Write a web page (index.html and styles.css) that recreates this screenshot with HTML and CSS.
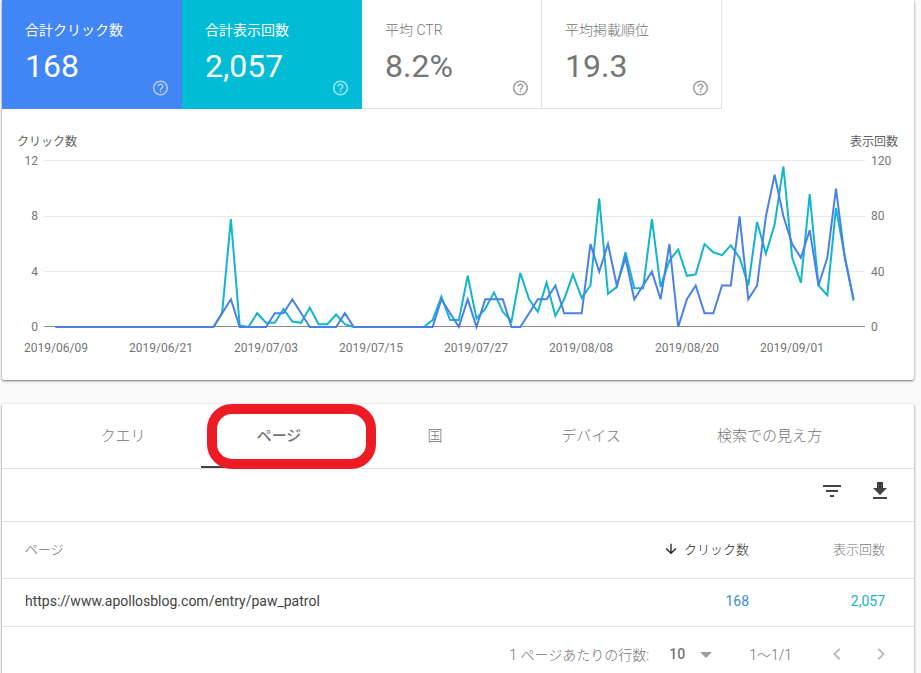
FILE: index.html
```html
<!DOCTYPE html>
<html lang="ja">
<head>
    <meta charset="utf-8">
    <title>検索パフォーマンス</title>
    <link rel="stylesheet" href="styles.css">
</head>
<body>
    <svg class="defs" width="0" height="0">
        <symbol id="help" viewBox="0 0 24 24">
            <path d="M11 18h2v-2h-2v2zm1-16C6.48 2 2 6.48 2 12s4.480 10 10 10 10-4.480 10-10S17.520 2 12 2zm0 18c-4.410 0-8-3.590-8-8s3.590-8 8-8 8 3.590 8 8-3.590 8-8 8zm0-14c-2.210 0-4 1.790-4 4h2c0-1.100.9-2 2-2s2 .9 2 2c0 2-3 1.750-3 5h2c0-2.250 3-2.500 3-5 0-2.210-1.790-4-4-4z"/>
        </symbol>
    </svg>

    <div class="card performance">
        <div class="tiles">
            <div class="tile clicks">
                <div class="tile-label">合計クリック数</div>
                <div class="tile-value">168</div>
                <svg class="help"><use href="#help"/></svg>
            </div>
            <div class="tile impressions">
                <div class="tile-label">合計表示回数</div>
                <div class="tile-value">2,057</div>
                <svg class="help"><use href="#help"/></svg>
            </div>
            <div class="tile">
                <div class="tile-label">平均 CTR</div>
                <div class="tile-value">8.2%</div>
                <svg class="help"><use href="#help"/></svg>
            </div>
            <div class="tile">
                <div class="tile-label">平均掲載順位</div>
                <div class="tile-value">19.3</div>
                <svg class="help"><use href="#help"/></svg>
            </div>
        </div>

        <div class="axis-titles">
            <span>クリック数</span>
            <span>表示回数</span>
        </div>
        <svg class="chart" width="912" height="230" viewBox="0 0 912 230">
            <g class="grid">
                <path d="M42 9.500H863M42 65.500H863M42 120.500H863"/>
                <path class="baseline" d="M42 175.500H863"/>
            </g>
            <g class="left-axis">
                <text x="36" y="14">12</text>
                <text x="36" y="69">8</text>
                <text x="36" y="125">4</text>
                <text x="36" y="180">0</text>
            </g>
            <g class="right-axis">
                <text x="869" y="14">120</text>
                <text x="869" y="69">80</text>
                <text x="869" y="125">40</text>
                <text x="869" y="180">0</text>
            </g>
            <g class="dates">
                <text x="54" y="201">2019/06/09</text>
                <text x="159" y="201">2019/06/21</text>
                <text x="264" y="201">2019/07/03</text>
                <text x="369" y="201">2019/07/15</text>
                <text x="474" y="201">2019/07/27</text>
                <text x="579" y="201">2019/08/08</text>
                <text x="685" y="201">2019/08/20</text>
                <text x="790" y="201">2019/09/01</text>
            </g>
            <polyline id="impressionsLine" class="line-impressions"/>
            <polyline id="clicksLine" class="line-clicks"/>
        </svg>
    </div>

    <div class="card details">
        <div class="tabs">
            <div class="tab">クエリ</div>
            <div class="tab active">ページ<span class="marker"></span></div>
            <div class="tab">国</div>
            <div class="tab">デバイス</div>
            <div class="tab wide">検索での見え方</div>
        </div>
        <div class="toolbar">
            <svg width="24" height="24" viewBox="0 0 24 24"><path d="M10 18h4v-2h-4v2zM3 6v2h18V6H3zm3 7h12v-2H6v2z"/></svg>
            <svg width="24" height="24" viewBox="0 0 24 24"><path d="M19 9h-4V3H9v6H5l7 7 7-7zM5 18v2h14v-2H5z"/></svg>
        </div>
        <table>
            <thead>
                <tr>
                    <th>ページ</th>
                    <th class="num sorted"><svg width="16" height="16" viewBox="0 0 24 24"><path d="M20 12l-1.410-1.410L13 16.170V4h-2v12.170l-5.580-5.590L4 12l8 8 8-8z"/></svg>クリック数</th>
                    <th class="num">表示回数</th>
                </tr>
            </thead>
            <tbody>
                <tr>
                    <td>https://www.apollosblog.com/entry/paw_patrol</td>
                    <td class="num blue">168</td>
                    <td class="num teal">2,057</td>
                </tr>
            </tbody>
        </table>
        <div class="pager">
            <span class="per-page">1 ページあたりの行数:</span>
            <span class="page-size">10</span>
            <svg class="caret" width="12" height="6" viewBox="0 0 12 6"><path d="M0 0h12L6 6z"/></svg>
            <span class="range">1～1/1</span>
            <svg class="prev" width="24" height="24" viewBox="0 0 24 24"><path d="M15.410 7.410L14 6l-6 6 6 6 1.410-1.410L10.830 12z"/></svg>
            <svg class="next" width="24" height="24" viewBox="0 0 24 24"><path d="M10 6L8.590 7.410 13.170 12l-4.580 4.590L10 18l6-6z"/></svg>
        </div>
    </div>

    <script>
        // one value per day, from 2019/06/09
        const clicks = [
            0,0,0,0,0,0,0,0,0,0,0,0,0,0,0,0,0,0,0,1,
            2,0,0,0,0,1,1,2,1,0,0,0,0,1,0,0,0,0,0,0,
            0,0,0,0,2,1,0,2,0,2,2,2,0,0,1,2,2,3,1,1,
            1,6,4,6,3,5,2,3,4,2,6,0,2,3,1,1,3,3,8,2,
            3,8,11,8,6,5,7,3,5,10,5,2
        ];
        const impressions = [
            0,0,0,0,0,0,0,0,0,0,0,0,0,0,0,0,0,0,0,10,
            78,1,0,10,3,3,13,4,3,14,2,2,9,2,0,0,0,0,0,0,
            0,0,0,5,22,5,5,37,6,13,25,11,4,39,20,11,32,8,20,38,
            21,30,93,24,29,54,28,28,78,29,48,56,37,38,60,54,52,59,50,30,
            76,53,74,116,50,32,96,30,23,86,51,19
        ];

        function drawLine(id, data, max) {
            const points = data.map((v, i) => (53.5 + i * 8.77).toFixed(1) + ',' + (176 - v / max * 166).toFixed(1));
            document.getElementById(id).setAttribute('points', points.join(' '));
        }

        drawLine('impressionsLine', impressions, 120);
        drawLine('clicksLine', clicks, 12);
    </script>
</body>
</html>
```
FILE: styles.css
```css
* {
    box-sizing: border-box;
}

body {
    margin: 0;
    height: 673px;
    overflow: hidden;
    background: #fafafa;
    font-family: Roboto, "Noto Sans CJK JP", sans-serif;
    font-size: 14px;
    color: #757575;
}

.defs {
    display: none;
}

.card {
    width: 912px;
    margin-left: 2px;
    background: #fff;
    border-radius: 0 0 2px 2px;
    box-shadow: 0 1px 3px rgba(0,0,0,0.3), 0 1px 2px rgba(0,0,0,0.3);
}

.performance {
    height: 380px;
}

/* Summary tiles */
.tiles {
    display: flex;
    height: 109px;
}

.tile {
    position: relative;
    width: 180px;
    padding: 20px 23px 0;
    border-right: 1px solid #e0e0e0;
    border-bottom: 1px solid #e0e0e0;
}

.tile.clicks {
    background: #4285f4;
    border: 0;
    color: #fff;
}

.tile.impressions {
    background: #00bcd4;
    border: 0;
    color: #fff;
}

.tile-label {
    height: 20px;
    line-height: 20px;
    font-weight: 300;
    white-space: nowrap;
}

.clicks .tile-label,
.impressions .tile-label {
    font-weight: 400;
}

.tile-value {
    margin-top: 6px;
    font-size: 32px;
    line-height: 40px;
}

.tile .help {
    position: absolute;
    left: 149px;
    top: 79px;
    width: 19px;
    height: 18px;
    fill: #9e9e9e;
}

.clicks .help,
.impressions .help {
    fill: rgba(255,255,255,0.6);
}

/* Chart */
.axis-titles {
    display: flex;
    justify-content: space-between;
    height: 42px;
    padding: 23px 16px 0 15px;
    font-size: 12px;
    line-height: 20px;
    color: #616161;
}

.chart {
    display: block;
    font-size: 12px;
    fill: #757575;
}

.grid path {
    stroke: #e8e8e8;
}

.grid .baseline {
    stroke: #8c8c8c;
}

.left-axis {
    text-anchor: end;
}

.dates {
    text-anchor: middle;
}

.chart polyline {
    fill: none;
    stroke-width: 2;
}

.line-impressions {
    stroke: #12b5cb;
}

.line-clicks {
    stroke: #4a80e8;
}

/* Details */
.details {
    height: 300px;
    margin-top: 24px;
}

.tabs {
    display: flex;
    height: 65px;
    padding-left: 43px;
    border-bottom: 1px solid #e0e0e0;
    font-size: 15px;
    font-weight: 300;
    line-height: 65px;
    text-align: center;
}

.tab {
    position: relative;
    width: 156px;
    height: 64px;
}

.tab.wide {
    width: 201px;
}

.tab.active {
    border-bottom: 2px solid #424242;
    font-weight: 500;
}

/* red ring around the selected tab */
.marker {
    position: absolute;
    left: 6px;
    top: 0;
    width: 169px;
    height: 65px;
    border: 10px solid #ed1c24;
    border-radius: 25px;
}

.toolbar {
    display: flex;
    justify-content: flex-end;
    align-items: center;
    gap: 24px;
    height: 53px;
    padding: 0 22px 8px 0;
    border-bottom: 1px solid #e0e0e0;
    fill: #424242;
}

table {
    width: 100%;
    table-layout: fixed;
    border-collapse: separate;
    border-spacing: 0;
}

th,
td {
    padding: 0 0 0 23px;
    border-bottom: 1px solid #e0e0e0;
    text-align: left;
}

th {
    height: 57px;
    padding-bottom: 4px;
    font-size: 13px;
    font-weight: 300;
}

td {
    height: 48px;
    padding-bottom: 4px;
    color: #424242;
}

.num {
    width: 165px;
    padding-left: 0;
    text-align: right;
}

.num:last-child {
    padding-right: 29px;
}

.sorted {
    color: #212121;
}

.sorted svg {
    margin-right: 5px;
    vertical-align: -3px;
    fill: #212121;
}

.blue {
    color: #3c8be0;
}

.teal {
    color: #12b5c4;
}

.pager {
    display: flex;
    align-items: center;
    height: 53px;
    padding-right: 21px;
    justify-content: flex-end;
    font-weight: 300;
}

.page-size {
    margin-left: 20px;
    font-weight: 500;
}

.caret {
    margin: 3px 0 0 15px;
    fill: #9e9e9e;
}

.range {
    margin-left: 37px;
}

.prev,
.next {
    fill: #bdbdbd;
}

.prev {
    margin-left: 33px;
}

.next {
    margin-left: 20px;
}
```
